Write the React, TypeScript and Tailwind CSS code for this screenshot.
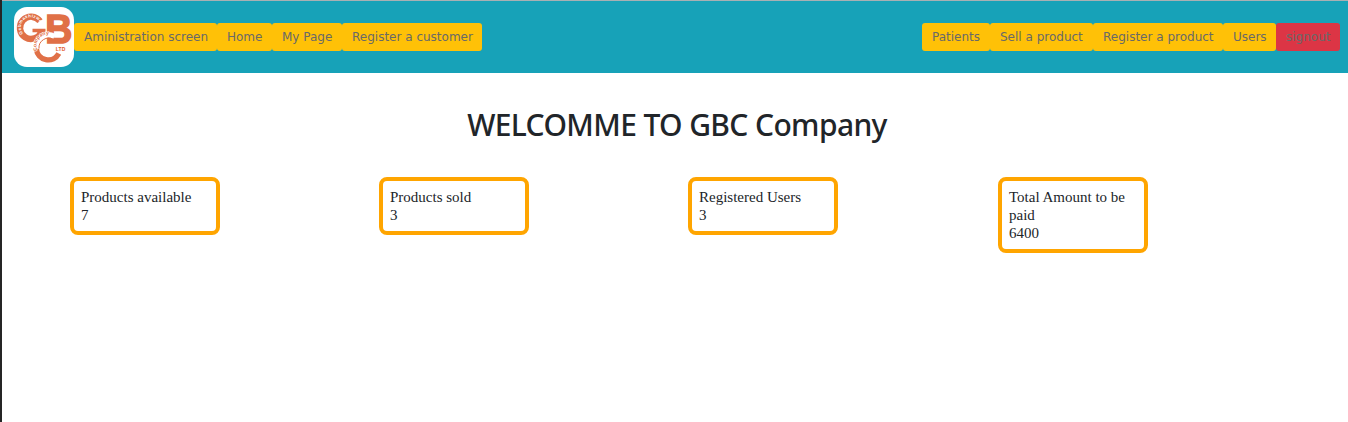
import React from "react";

type NavItem = { label: string; width: string; danger?: boolean };

const leftItems: NavItem[] = [
  { label: "Aministration screen", width: "w-[143px]" },
  { label: "Home", width: "w-[55px]" },
  { label: "My Page", width: "w-[70px]" },
  { label: "Register a customer", width: "w-[140px]" },
];

const rightItems: NavItem[] = [
  { label: "Patients", width: "w-[68px]" },
  { label: "Sell a product", width: "w-[103px]" },
  { label: "Register a product", width: "w-[130px]" },
  { label: "Users", width: "w-[53px]" },
  { label: "signout", width: "w-[64px]", danger: true },
];

const cards = [
  { title: "Products available", value: 7 },
  { title: "Products sold", value: 3 },
  { title: "Registered Users", value: 3 },
  { title: "Total Amount to be paid", value: 6400 },
];

function NavButton({ item }: { item: NavItem }) {
  return (
    <button
      className={`${item.width} ${item.danger ? "bg-[#dc3545]" : "bg-[#ffc107]"} flex h-7 shrink-0 items-center whitespace-nowrap rounded-[3px] pl-[10px] font-['DejaVu_Sans',Verdana,sans-serif] text-[12px] leading-none text-[#696969]`}
    >
      {item.label}
    </button>
  );
}

function Logo() {
  return (
    <svg className="size-[60px] shrink-0 rounded-[13px] bg-white" viewBox="0 0 60 60" fontFamily="Liberation Sans, sans-serif" fontWeight="bold">
      <defs>
        <path id="ringG" d="M9 26.5 A10 10 0 1 1 26 16.3" />
        <path id="ringC" d="M23.7 43.5 A10.8 10.8 0 0 1 43 33.6" />
      </defs>
      <text x="31.2" y="35.6" fontSize="41" fill="#e07047" stroke="#e07047" strokeWidth="1.6" textLength="27" lengthAdjust="spacingAndGlyphs">B</text>
      <g fill="none" stroke="#e07047" strokeWidth="6.4">
        <path d="M26 14.2 A11.1 11.1 0 1 0 27.4 24.8" />
        <path d="M18.5 23.5 H31.5" strokeWidth="3.4" />
        <path d="M21.8 42 A12.7 12.7 0 0 1 40.5 29.4" stroke="#fff" strokeWidth="5.4" />
        <path d="M22.4 42 A11.9 11.9 0 0 0 44.8 46.5" strokeWidth="5.4" />
        <path d="M25 41.5 A9.6 9.6 0 0 1 39.5 32.5" strokeWidth="1" />
      </g>
      <text fontSize="4.4" fill="#fff" letterSpacing="0.4">
        <textPath href="#ringG">Gebmashizwe</textPath>
      </text>
      <text fontSize="5" fill="#e07047" stroke="#fff" strokeWidth="1" paintOrder="stroke" letterSpacing="0.1">
        <textPath href="#ringC">Company</textPath>
      </text>
      <text x="41.8" y="44" fontSize="5" fill="#df5b2f" textLength="9.5">LTD</text>
    </svg>
  );
}

export default function App() {
  return (
    <div className="h-[422px] w-full overflow-hidden border-l-2 border-[#252525] bg-white">
      <nav className="flex h-[73px] items-center border-t border-[#a9b0b3] bg-[#17a2b8] pl-3 pr-2">
        <Logo />
        <div className="flex">
          {leftItems.map((item) => <NavButton key={item.label} item={item} />)}
        </div>
        <div className="ml-auto flex">
          {rightItems.map((item) => <NavButton key={item.label} item={item} />)}
        </div>
      </nav>
      <h1 className="mt-[33px] pl-1 text-center font-['Noto_Sans',sans-serif] text-[30px] font-medium leading-[38px] tracking-[-0.62px] text-[#212529]">
        WELCOMME TO GBC Company
      </h1>
      <div className="ml-[68px] mt-[33px] grid grid-cols-[309px_309px_310px_150px] items-start">
        {cards.map((card) => (
          <div
            key={card.title}
            className="w-[150px] rounded-[8px] border-4 border-[#ffa500] px-[7px] py-[7px] font-['Liberation_Serif',serif] text-[15px] leading-[18px] text-[#212529]"
          >
            <p>{card.title}</p>
            <p>{card.value}</p>
          </div>
        ))}
      </div>
    </div>
  );
}
